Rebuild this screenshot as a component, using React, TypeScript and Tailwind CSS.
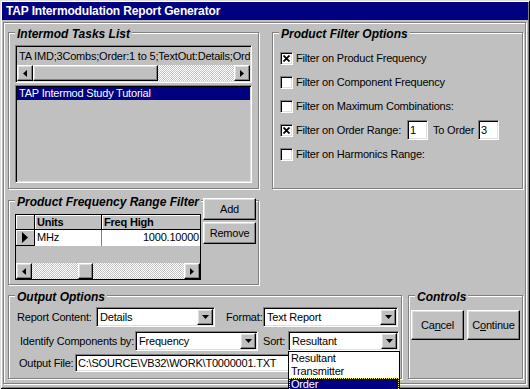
import React from 'react';

const sunken =
    'border border-t-[#808080] border-l-[#808080] border-r-white border-b-white shadow-[inset_1px_1px_0_#000,inset_-1px_-1px_0_#dfdfdf]';
const raised =
    'border border-t-white border-l-white border-r-black border-b-black shadow-[inset_-1px_-1px_0_#808080,inset_1px_1px_0_#dfdfdf]';
const etched = 'border border-[#808080] shadow-[inset_1px_1px_0_#fff,1px_1px_0_#fff]';
const dither = 'bg-[repeating-conic-gradient(#fff_0%_25%,#c0c0c0_0%_50%)] bg-[length:2px_2px]';

const Tri = ({ dir }: { dir: 'left' | 'right' | 'down' }) => {
    if (dir === 'down') {
        return (
            <svg width="7" height="4" viewBox="0 0 7 4">
                <path d="M0 0H7L3.5 4Z" fill="#000" />
            </svg>
        );
    }
    return (
        <svg width="4" height="7" viewBox="0 0 4 7">
            <path d={dir === 'left' ? 'M4 0V7L0 3.5Z' : 'M0 0V7L4 3.5Z'} fill="#000" />
        </svg>
    );
};

const ArrowBtn = ({ dir }: { dir: 'left' | 'right' }) => (
    <div className={`${raised} flex w-[16px] shrink-0 items-center justify-center bg-[#c0c0c0]`}>
        <Tri dir={dir} />
    </div>
);

const GroupBox = ({ label, className, children }: { label: string; className: string; children?: React.ReactNode }) => (
    <div className={`${etched} ${className}`}>
        <div className="ml-[6px] -mt-[6px] h-[14px] w-fit bg-[#c0c0c0] px-[2px] text-[12px] font-bold italic leading-[14px] tracking-normal">
            {label}
        </div>
        {children}
    </div>
);

const Check = ({ checked, label }: { checked?: boolean; label: string }) => (
    <div className="flex h-[24px] items-center gap-[3px]">
        <div className={`${sunken} flex h-[13px] w-[13px] items-center justify-center bg-white`}>
            {checked && (
                <svg width="7" height="7" viewBox="0 0 7 7">
                    <path d="M0.5 0.5L6.5 6.5M6.5 0.5L0.5 6.5" stroke="#000" strokeWidth="1.8" />
                </svg>
            )}
        </div>
        <span>{label}</span>
    </div>
);

const Combo = ({ value, className }: { value: string; className: string }) => (
    <div className={`${sunken} flex h-[20px] bg-white p-[1px] ${className}`}>
        <span className="flex-1 overflow-hidden whitespace-nowrap pl-[2px] leading-[16px]">{value}</span>
        <div className={`${raised} flex w-[16px] items-center justify-center bg-[#c0c0c0]`}>
            <Tri dir="down" />
        </div>
    </div>
);

const App = () => {
    return (
        <div
            className="h-[389px] w-[530px] overflow-hidden bg-[#c0c0c0] p-[2px] text-[11px] tracking-[-0.2px] text-black shadow-[inset_1px_1px_0_#dfdfdf,inset_-1px_-1px_0_#000,inset_2px_2px_0_#fff,inset_-2px_-2px_0_#808080]"
            style={{ fontFamily: '"Liberation Sans", Arial, sans-serif' }}
        >
            {/* title bar */}
            <div className="h-[18px] bg-[#000080] pl-[4px] pt-[1px] text-[12px] font-bold leading-[17px] tracking-[-0.15px] text-white">
                TAP Intermodulation Report Generator
            </div>

            {/* client frame */}
            <div className={`${etched} ml-[1px] mt-[2px] h-[362px] w-[523px] pl-[4px] pt-[9px]`}>
                <div className="flex gap-[13px]">
                    <div className="flex flex-col">
                        <GroupBox label="Intermod Tasks List" className="h-[157px] w-[251px]">
                            <div className={`${sunken} ml-[6px] mt-[4px] flex h-[38px] w-[237px] flex-col p-[1px]`}>
                                <div className="h-[18px] overflow-hidden whitespace-nowrap pl-[2px] leading-[18px]">
                                    TA IMD;3Combs;Order:1 to 5;TextOut:Details;Order
                                </div>
                                <div className="flex h-[16px]">
                                    <ArrowBtn dir="left" />
                                    <div className={`${raised} w-[125px] bg-[#c0c0c0]`} />
                                    <div className={`${dither} flex-1`} />
                                    <ArrowBtn dir="right" />
                                </div>
                            </div>
                            <div className={`${sunken} ml-[6px] mt-[2px] h-[98px] w-[237px] p-[1px]`}>
                                <div className="h-[13px] bg-[#000080] pl-[2px] leading-[13px] text-white">
                                    TAP Intermod Study Tutorial
                                </div>
                            </div>
                        </GroupBox>

                        <div className={`${etched} mt-[11px] h-[85px] w-[251px]`}>
                            <div className="flex">
                                <div className="flex flex-col">
                                    <div className="ml-[6px] -mt-[6px] h-[14px] w-fit bg-[#c0c0c0] px-[2px] text-[12px] font-bold italic leading-[14px] tracking-normal">
                                        Product Frequency Range Filter
                                    </div>
                                    <div className="ml-[6px] mt-[5px] flex h-[66px] w-[186px] flex-col border border-black">
                                        <div className="flex h-[15px] border-b border-black font-bold">
                                            <div className="w-[19px] border-r border-black shadow-[inset_1px_1px_0_#fff]" />
                                            <div className="w-[67px] border-r border-black pl-[2px] leading-[14px] shadow-[inset_1px_1px_0_#fff]">
                                                Units
                                            </div>
                                            <div className="flex-1 pl-[2px] leading-[14px] shadow-[inset_1px_1px_0_#fff]">Freq High</div>
                                        </div>
                                        <div className="flex h-[16px]">
                                            <div className="flex w-[19px] items-center justify-center border-b border-r border-black shadow-[inset_1px_1px_0_#fff]">
                                                <svg width="6" height="11" viewBox="0 0 6 11">
                                                    <path d="M0 0V11L6 5.5Z" fill="#000" />
                                                </svg>
                                            </div>
                                            <div className="w-[67px] border-r border-[#808080] bg-white pl-[2px] leading-[15px]">MHz</div>
                                            <div className="flex-1 overflow-hidden whitespace-nowrap bg-white pr-[1px] text-right leading-[15px]">
                                                1000.10000
                                            </div>
                                        </div>
                                        <div className="flex-1" />
                                        <div className="flex h-[16px]">
                                            <ArrowBtn dir="left" />
                                            <div className={`${dither} w-[46px]`} />
                                            <div className={`${raised} w-[15px] bg-[#c0c0c0]`} />
                                            <div className={`${dither} flex-1`} />
                                            <ArrowBtn dir="right" />
                                        </div>
                                    </div>
                                </div>
                                <div className="-mt-[3px] ml-[2px] flex flex-col gap-[2px]">
                                    <button className={`${raised} h-[22px] w-[53px] bg-[#c0c0c0]`}>Add</button>
                                    <button className={`${raised} h-[22px] w-[53px] bg-[#c0c0c0]`}>Remove</button>
                                </div>
                            </div>
                        </div>
                    </div>

                    <GroupBox label="Product Filter Options" className="h-[157px] w-[251px]">
                        <div className="ml-[7px] mt-[5px] flex flex-col">
                            <Check checked label="Filter on Product Frequency" />
                            <Check label="Filter on Component Frequency" />
                            <Check label="Filter on Maximum Combinations:" />
                            <div className="flex h-[24px] items-center">
                                <div className="flex w-[127px] items-center gap-[3px]">
                                    <div className={`${sunken} flex h-[13px] w-[13px] items-center justify-center bg-white`}>
                                        <svg width="7" height="7" viewBox="0 0 7 7">
                                            <path d="M0.5 0.5L6.5 6.5M6.5 0.5L0.5 6.5" stroke="#000" strokeWidth="1.8" />
                                        </svg>
                                    </div>
                                    <span>Filter on Order Range:</span>
                                </div>
                                <div className={`${sunken} h-[20px] w-[21px] bg-white pl-[2px] leading-[18px]`}>1</div>
                                <span className="ml-[5px] w-[45px]">To Order</span>
                                <div className={`${sunken} h-[20px] w-[21px] bg-white pl-[2px] leading-[18px]`}>3</div>
                            </div>
                            <Check label="Filter on Harmonics Range:" />
                        </div>
                    </GroupBox>
                </div>

                <div className="mt-[10px] flex gap-[6px]">
                    <GroupBox label="Output Options" className="h-[84px] w-[394px]">
                        <div className="mt-[3px] flex h-[20px] items-center">
                            <span className="ml-[8px] w-[79px]">Report Content:</span>
                            <Combo value="Details" className="w-[119px]" />
                            <span className="ml-[11px] w-[37px]">Format:</span>
                            <Combo value="Text Report" className="w-[135px]" />
                        </div>
                        <div className="mt-[4px] flex h-[20px] items-center">
                            <span className="ml-[11px] w-[115px]">Identify Components by:</span>
                            <Combo value="Frequency" className="w-[123px]" />
                            <span className="ml-[5px] w-[25px]">Sort:</span>
                            <div className="relative">
                                <Combo value="Resultant" className="w-[111px]" />
                                <div className="absolute left-0 top-[20px] z-10 w-[112px] border border-black bg-white">
                                    <div className="h-[13px] pl-[2px] leading-[13px]">Resultant</div>
                                    <div className="h-[13px] pl-[2px] leading-[13px]">Transmitter</div>
                                    <div className="h-[13px] bg-[#000080] pl-[2px] leading-[13px] text-white outline-1 -outline-offset-1 outline-dotted outline-[#ffff00]">
                                        Order
                                    </div>
                                </div>
                            </div>
                        </div>
                        <div className="mt-[3px] flex h-[18px] items-center">
                            <span className="ml-[10px] w-[56px]">Output File:</span>
                            <div className={`${sunken} h-[18px] w-[324px] overflow-hidden whitespace-nowrap bg-white pl-[2px] leading-[16px]`}>
                                {'C:\\SOURCE\\VB32\\WORK\\T0000001.TXT'}
                            </div>
                        </div>
                    </GroupBox>

                    <GroupBox label="Controls" className="h-[84px] w-[115px]">
                        <div className="ml-[2px] mt-[6px] flex gap-[3px]">
                            <button className={`${raised} h-[30px] w-[53px] bg-[#c0c0c0]`}>
                                Ca<span className="underline">n</span>cel
                            </button>
                            <button className={`${raised} h-[30px] w-[53px] bg-[#c0c0c0]`}>
                                C<span className="underline">o</span>ntinue
                            </button>
                        </div>
                    </GroupBox>
                </div>
            </div>
        </div>
    );
};

export default App;
